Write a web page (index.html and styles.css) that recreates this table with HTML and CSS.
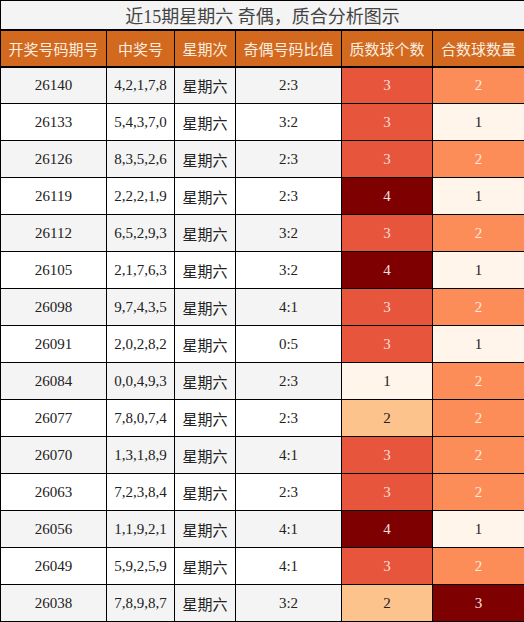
FILE: index.html
```html
<!DOCTYPE html>
<html lang="zh">
<head>
    <meta charset="UTF-8">
    <title>近15期星期六 奇偶，质合分析图示</title>
    <link rel="stylesheet" href="styles.css">
</head>
<body>
    <table class="stats">
        <colgroup>
            <col class="c-issue">
            <col class="c-nums">
            <col class="c-day">
            <col class="c-ratio">
            <col class="c-prime">
            <col class="c-comp">
        </colgroup>
        <tr class="title-row">
            <td colspan="6">近15期星期六 奇偶，质合分析图示</td>
        </tr>
        <tr class="head-row">
            <th>开奖号码期号</th>
            <th>中奖号</th>
            <th>星期次</th>
            <th>奇偶号码比值</th>
            <th>质数球个数</th>
            <th>合数球数量</th>
        </tr>
        <tr><td>26140</td><td>4,2,1,7,8</td><td>星期六</td><td>2:3</td><td class="lv3">3</td><td class="lv2">2</td></tr>
        <tr><td>26133</td><td>5,4,3,7,0</td><td>星期六</td><td>3:2</td><td class="lv3">3</td><td class="lv0">1</td></tr>
        <tr><td>26126</td><td>8,3,5,2,6</td><td>星期六</td><td>2:3</td><td class="lv3">3</td><td class="lv2">2</td></tr>
        <tr><td>26119</td><td>2,2,2,1,9</td><td>星期六</td><td>2:3</td><td class="lv4">4</td><td class="lv0">1</td></tr>
        <tr><td>26112</td><td>6,5,2,9,3</td><td>星期六</td><td>3:2</td><td class="lv3">3</td><td class="lv2">2</td></tr>
        <tr><td>26105</td><td>2,1,7,6,3</td><td>星期六</td><td>3:2</td><td class="lv4">4</td><td class="lv0">1</td></tr>
        <tr><td>26098</td><td>9,7,4,3,5</td><td>星期六</td><td>4:1</td><td class="lv3">3</td><td class="lv2">2</td></tr>
        <tr><td>26091</td><td>2,0,2,8,2</td><td>星期六</td><td>0:5</td><td class="lv3">3</td><td class="lv0">1</td></tr>
        <tr><td>26084</td><td>0,0,4,9,3</td><td>星期六</td><td>2:3</td><td class="lv0">1</td><td class="lv2">2</td></tr>
        <tr><td>26077</td><td>7,8,0,7,4</td><td>星期六</td><td>2:3</td><td class="lv1">2</td><td class="lv2">2</td></tr>
        <tr><td>26070</td><td>1,3,1,8,9</td><td>星期六</td><td>4:1</td><td class="lv3">3</td><td class="lv2">2</td></tr>
        <tr><td>26063</td><td>7,2,3,8,4</td><td>星期六</td><td>2:3</td><td class="lv3">3</td><td class="lv2">2</td></tr>
        <tr><td>26056</td><td>1,1,9,2,1</td><td>星期六</td><td>4:1</td><td class="lv4">4</td><td class="lv0">1</td></tr>
        <tr><td>26049</td><td>5,9,2,5,9</td><td>星期六</td><td>4:1</td><td class="lv3">3</td><td class="lv2">2</td></tr>
        <tr><td>26038</td><td>7,8,9,8,7</td><td>星期六</td><td>3:2</td><td class="lv1">2</td><td class="lv4">3</td></tr>
    </table>
</body>
</html>
```

FILE: styles.css
```css
* {
    margin: 0;
    padding: 0;
    box-sizing: border-box;
}

body {
    font-family: 'Liberation Serif', 'Noto Sans CJK SC', serif;
    background-color: #fff;
}

.stats {
    width: 524px;
    table-layout: fixed;
    border-collapse: collapse;
    color: #222;
    font-size: 15px;
}

.c-issue { width: 106px; }
.c-nums { width: 68px; }
.c-day { width: 61px; }
.c-ratio { width: 106px; }
.c-prime { width: 91px; }
.c-comp { width: 92px; }

.stats td,
.stats th {
    border: 1.5px solid #000;
    text-align: center;
    height: 37px;
    font-weight: normal;
}

.title-row td {
    height: 29px;
    background-color: #e0ebcc;
    color: #444;
    font-size: 18px;
    border-bottom-width: 2px;
}

.head-row th {
    background-color: #d2691e;
    color: #fbeee0;
    font-family: 'Noto Sans CJK SC', sans-serif;
    font-size: 15px;
    border-bottom-width: 2px;
}

.stats tr:nth-child(odd) td {
    background-color: #f4f4f4;
}

.stats tr:nth-child(even) td {
    background-color: #fff;
}

.stats .lv0 { background-color: #fff5eb !important; color: #222; }
.stats .lv1 { background-color: #fdc38d !important; color: #222; }
.stats .lv2 { background-color: #fc8d59 !important; color: #fde9dc; }
.stats .lv3 { background-color: #e8553d !important; color: #f9dcd4; }
.stats .lv4 { background-color: #7f0000 !important; color: #f3e0e0; }
```
